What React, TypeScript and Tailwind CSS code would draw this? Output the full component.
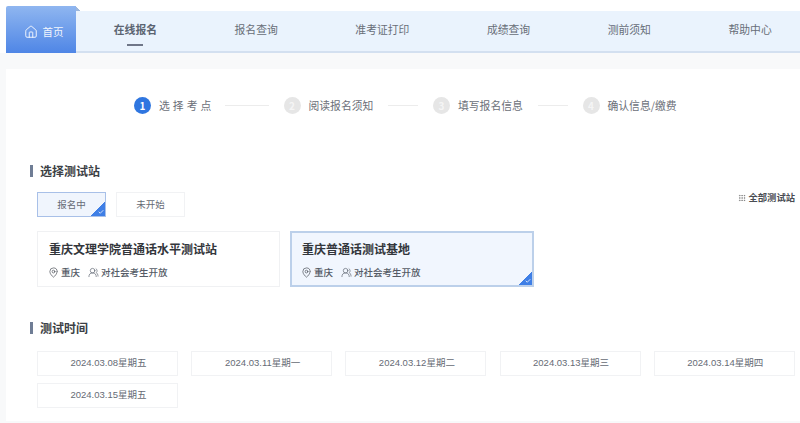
import React from "react";
import { Check, House, MapPin, UsersRound, Grip } from "lucide-react";

const navItems = ["在线报名", "报名查询", "准考证打印", "成绩查询", "测前须知", "帮助中心"];
const steps = ["选 择 考 点", "阅读报名须知", "填写报名信息", "确认信息/缴费"];
const dates = [
  "2024.03.08星期五",
  "2024.03.11星期一",
  "2024.03.12星期二",
  "2024.03.13星期三",
  "2024.03.14星期四",
  "2024.03.15星期五",
];

function Corner() {
  return (
    <span className="absolute right-0 bottom-0 w-[14px] h-[14px] bg-[linear-gradient(135deg,transparent_50%,#3f7fe6_50%)]">
      <Check size={6} strokeWidth={3} className="absolute right-[1px] bottom-[1px] text-white" />
    </span>
  );
}

function SectionTitle({ children }: { children: React.ReactNode }) {
  return (
    <div className="flex items-center gap-[7px] h-[16px]">
      <span className="w-[3px] h-[12px] bg-[#6f7d95]" />
      <span className="text-[12px] font-bold text-[#3c3f45]">{children}</span>
    </div>
  );
}

function SiteCard({ name, active }: { name: string; active?: boolean }) {
  return (
    <div
      className={`relative h-[56px] ${
        active
          ? "w-[244px] pl-[10px] pt-[7px] border-2 border-[#bcd0ea] bg-[#f1f6fe]"
          : "w-[243px] pl-[11px] pt-[8px] border border-[#f0f1f3] bg-white"
      }`}
    >
      <div className="text-[12px] leading-[17px] font-bold text-[#33363b]">{name}</div>
      <div className="flex items-center mt-[8px] text-[9.5px] leading-[14px] font-medium text-[#555b66]">
        <MapPin size={11} strokeWidth={1.5} className="-ml-[1px] mr-[2px] text-[#4a4f58]" />
        <span>重庆</span>
        <UsersRound size={11} strokeWidth={1.5} className="ml-[8px] mr-[2px] text-[#5f6672]" />
        <span>对社会考生开放</span>
      </div>
      {active && <Corner />}
    </div>
  );
}

export default function App() {
  return (
    <div className="w-[800px] h-[423px] overflow-hidden bg-[#f8f9fa] font-['Noto_Sans_CJK_SC','Liberation_Sans',sans-serif]">
      {/* Top nav */}
      <div className="h-[53px] pl-[6px] flex items-end bg-white">
        <div className="relative z-10 shrink-0 w-[70px] h-[47px] flex items-center justify-center pt-[5px] pl-[5px] gap-[5px] text-white text-[10.5px] rounded-tl-[2px] bg-[linear-gradient(to_bottom,#8fb6f0,#4f86e6)]">
          <span className="absolute top-0 -right-[4px] w-[4px] h-[5px] bg-[linear-gradient(45deg,#9db7dc_50%,transparent_50%)]" />
          <House size={14} strokeWidth={1.5} />
          <span className="opacity-90">首页</span>
        </div>
        <div className="flex-1 min-w-0 flex h-[42px] pl-0 bg-[#eaf3fd] border-b-2 border-[#d3e0f0]">
          {navItems.map((item, i) => (
            <div
              key={item}
              className={`relative shrink-0 first:-ml-px px-[38.8px] flex items-center justify-center pb-[3px] text-[10.8px] whitespace-nowrap ${
                i === 0 ? "font-bold text-[#5b6472]" : "text-[#686e78]"
              }`}
            >
              {item}
              {i === 0 && <span className="absolute bottom-[5px] w-[16px] h-[2px] bg-[#6f7688]" />}
            </div>
          ))}
        </div>
      </div>

      {/* Main card */}
      <div className="mt-[16px] ml-[6px] h-[352px] bg-white">
        {/* Steps */}
        <div className="h-[72px] pl-[128px] flex items-center">
          {steps.map((s, i) => (
            <React.Fragment key={s}>
              <span
                className={`w-[17px] h-[17px] shrink-0 rounded-full flex items-center justify-center text-[10px] font-bold ${
                  i === 0 ? "bg-[#2f76e0] text-white" : "bg-[#e6e6e6] text-[#f5f5f5]"
                }`}
              >
                {i + 1}
              </span>
              <span className={`ml-[8px] w-[64.5px] text-[10.8px] text-[#6c7079] whitespace-nowrap ${i === 0 ? "tracking-[0.3px]" : ""}`}>
                {s}
              </span>
              {i === 0 && <span className="ml-[1px] mr-[15px] w-[44px] h-px bg-[#ececec]" />}
              {i > 0 && i < 3 && <span className="mx-[15px] w-[30px] h-px bg-[#ececec]" />}
            </React.Fragment>
          ))}
        </div>

        {/* 选择测试站 */}
        <div className="pl-[24px] pt-[22px]">
          <SectionTitle>选择测试站</SectionTitle>
          <div className="flex items-start justify-between mt-[13px]">
            <div className="flex gap-[10px] ml-[7px]">
              <div className="relative w-[69px] h-[25px] flex items-center justify-center border border-[#a8c0e8] bg-[#f0f5fd] text-[9.5px] text-[#666b75]">
                报名中
                <Corner />
              </div>
              <div className="w-[69px] h-[25px] flex items-center justify-center border border-[#f1f2f4] text-[9.5px] text-[#666b75]">
                未开始
              </div>
            </div>
            <div className="flex items-center gap-[3px] -mt-[1px] pr-[5px] text-[9.3px] font-bold text-[#4a4d53]">
              <Grip size={8} className="text-[#777]" />
              全部测试站
            </div>
          </div>
          <div className="flex gap-[10px] ml-[7px] mt-[14px]">
            <SiteCard name="重庆文理学院普通话水平测试站" />
            <SiteCard name="重庆普通话测试基地" active />
          </div>

          {/* 测试时间 */}
          <div className="mt-[33px]">
            <SectionTitle>测试时间</SectionTitle>
          </div>
          <div className="flex flex-wrap gap-x-[13.2px] gap-y-[7px] ml-[7px] mt-[15px] font-['Liberation_Sans','Noto_Sans_CJK_SC',sans-serif]">
            {dates.map((d) => (
              <div
                key={d}
                className="w-[141px] h-[25px] pl-[2px] flex items-center justify-center border border-[#f1f2f4] text-[9.5px] text-[#666b75] whitespace-nowrap"
              >
                {d}
              </div>
            ))}
          </div>
        </div>
      </div>
    </div>
  );
}
